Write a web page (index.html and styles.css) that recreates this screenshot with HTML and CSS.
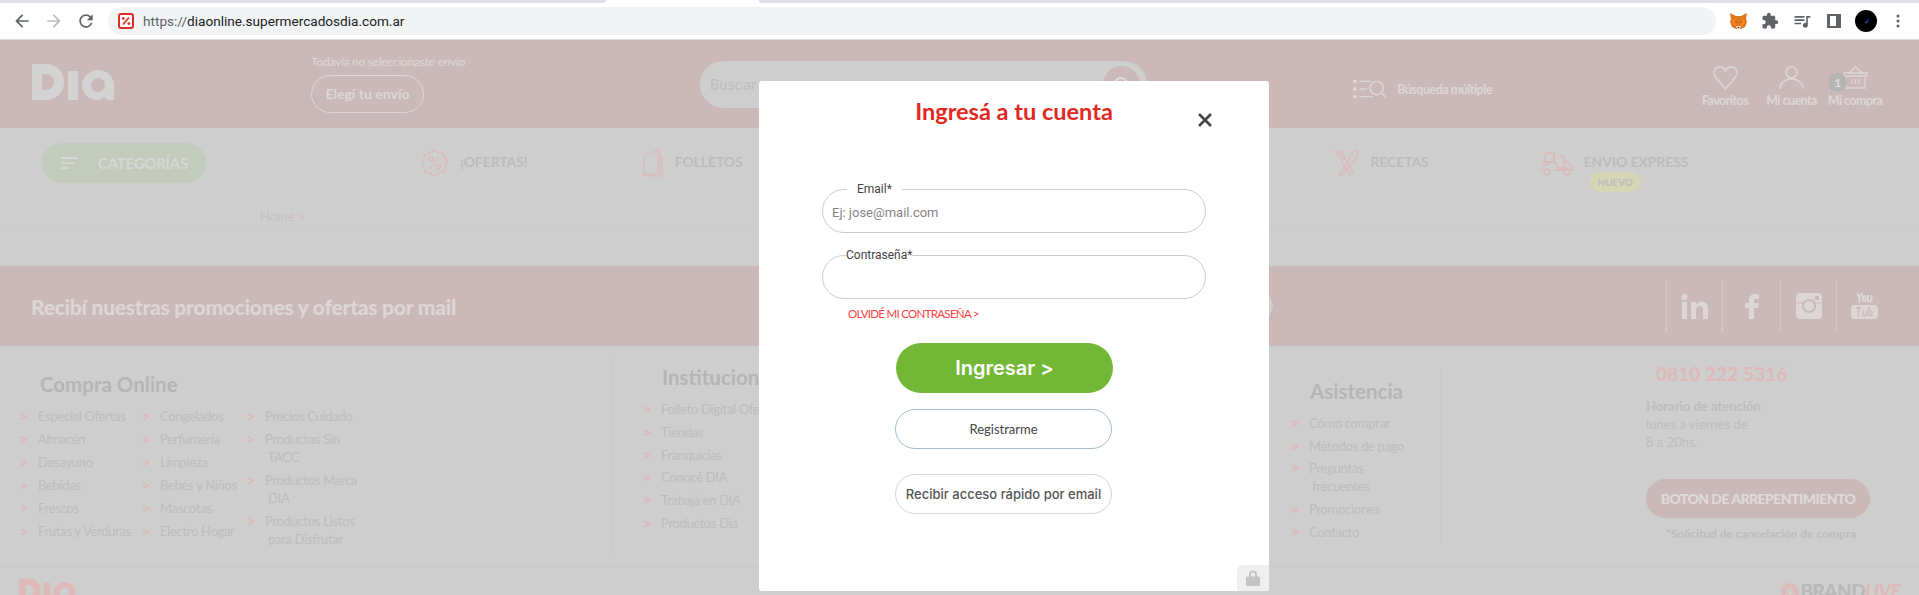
FILE: index.html
```html
<!DOCTYPE html>
<html lang="es">
<head>
<meta charset="utf-8">
<title>Dia Online</title>
<link rel="stylesheet" href="styles.css">
</head>
<body>

<svg class="defs" width="0" height="0">
  <symbol id="dia-logo" viewBox="0 0 83 36">
    <path fill-rule="evenodd" d="M0 0h13c12 0 19 8 19 18s-7 18-19 18H0zM10 10v16h3c5 0 9-3 9-8s-4-8-9-8z"/>
    <rect x="36" y="7" width="10" height="29"/>
    <path fill-rule="evenodd" d="M66 6c9 0 16 7 16 15v15h-6l-4-3c-2 1-4 3-7 3-8 0-15-7-15-15S58 6 66 6zM66 14a7 7 0 100 14 7 7 0 000-14z"/>
  </symbol>
</svg>

<div class="tabstrip">
  <div class="tab-off tab-left"></div>
  <div class="tab-on"></div>
  <div class="tab-off tab-right"></div>
</div>
<div class="toolbar">
  <svg class="nav-btn" viewBox="0 0 24 24"><path d="M20 11H7.830l5.590-5.590L12 4l-8 8 8 8 1.410-1.410L7.830 13H20v-2z"/></svg>
  <svg class="nav-btn off" viewBox="0 0 24 24"><path d="M12 4l-1.410 1.410L16.170 11H4v2h12.170l-5.580 5.590L12 20l8-8z"/></svg>
  <svg class="nav-btn" viewBox="0 0 24 24"><path d="M17.650 6.350A7.958 7.958 0 0012 4c-4.420 0-7.990 3.580-7.990 8s3.570 8 7.990 8c3.730 0 6.840-2.550 7.730-6h-2.080A5.990 5.990 0 0112 18c-3.310 0-6-2.690-6-6s2.690-6 6-6c1.660 0 3.140.69 4.220 1.780L13 11h7V4l-2.350 2.350z"/></svg>
  <div class="urlbar">
    <svg class="favicon" viewBox="0 0 16 16">
      <rect x="1" y="1" width="14" height="14" rx="2" fill="#fff" stroke="#e02b2b" stroke-width="2"/>
      <path d="M11 4.500L5 11.500" stroke="#e02b2b" stroke-width="1.800"/>
      <circle cx="5.200" cy="5.400" r="1.400" fill="#e02b2b"/>
      <circle cx="10.800" cy="10.600" r="1.400" fill="#e02b2b"/>
    </svg>
    <span class="url"><span class="url-dim">https://</span>diaonline.supermercadosdia.com.ar</span>
  </div>
  <div class="ext-icons">
    <div class="ext">
      <svg width="17" height="16" viewBox="0 0 17 16">
        <path fill="#e2761b" d="M0 0l6 3h5l6-3-1 6 1 3-2 5-4 2H6l-4-2-2-5 1-3z"/>
        <path fill="#f6851b" d="M2 7l3-1 2 4-1 3-3-1zM15 7l-3-1-2 4 1 3 3-1z"/>
        <path fill="#763d16" d="M5 8l2 1-1 1zM12 8l-2 1 1 1z"/>
        <path fill="#e4e0dc" d="M6 13h5l-1 3H7z"/>
        <path fill="#222" d="M7.500 14h2l-1 1.500z"/>
      </svg>
    </div>
    <div class="ext">
      <svg class="ext-gray" width="18" height="18" viewBox="0 0 24 24"><path d="M20.500 11H19V7c0-1.100-.9-2-2-2h-4V3.500C13 2.120 11.880 1 10.500 1S8 2.120 8 3.500V5H4c-1.100 0-1.990.9-1.990 2v3.800H3.500c1.490 0 2.700 1.210 2.700 2.700s-1.210 2.700-2.700 2.700H2V20c0 1.100.9 2 2 2h3.800v-1.500c0-1.490 1.210-2.700 2.700-2.700 1.490 0 2.700 1.210 2.700 2.700V22H17c1.100 0 2-.9 2-2v-4h1.500c1.380 0 2.500-1.120 2.500-2.500S21.880 11 20.500 11z"/></svg>
    </div>
    <div class="ext">
      <svg class="ext-gray" width="20" height="20" viewBox="0 0 24 24"><path d="M15 6H3v2h12V6zm0 4H3v2h12v-2zM3 16h8v-2H3v2zM17 6v8.180c-.31-.11-.65-.18-1-.18-1.660 0-3 1.340-3 3s1.340 3 3 3 3-1.340 3-3V8h3V6h-5z"/></svg>
    </div>
    <div class="ext">
      <svg class="ext-gray" width="14" height="14" viewBox="0 0 14 14"><path fill-rule="evenodd" d="M0 0h14v14H0zM3 2v10h6V2z"/></svg>
    </div>
    <div class="ext">
      <svg width="22" height="22" viewBox="0 0 22 22">
        <circle cx="11" cy="11" r="11" fill="#000"/>
        <path d="M13 9.500c0 2-1.200 3.200-3 3.200" fill="none" stroke="#1d4fc4" stroke-width="1.200"/>
      </svg>
    </div>
    <div class="ext">
      <svg class="ext-gray" width="4" height="14" viewBox="0 0 4 14"><circle cx="2" cy="2" r="1.500"/><circle cx="2" cy="7" r="1.500"/><circle cx="2" cy="12" r="1.500"/></svg>
    </div>
  </div>
</div>

<div class="page">
  <header class="top">
    <svg class="logo"><use href="#dia-logo"/></svg>
    <div class="envio">
      <div class="envio-note">Todavía no seleccionaste envío</div>
      <div class="envio-btn">Elegí tu envío</div>
    </div>
    <div class="search">
      <span>Buscar</span>
      <div class="search-go">
        <svg width="20" height="20" viewBox="0 0 20 20" fill="none" stroke="#dcdcdc" stroke-width="2"><circle cx="9" cy="9" r="6"/><path d="M13.500 13.500L18 18"/></svg>
      </div>
    </div>
    <div class="multi">
      <svg width="35" height="20" viewBox="0 0 35 20" fill="none" stroke="#dcd6d6" stroke-width="1.500">
        <circle cx="2" cy="2" r="1.200" fill="#dcd6d6"/><circle cx="2" cy="10" r="1.200" fill="#dcd6d6"/><circle cx="2" cy="18" r="1.200" fill="#dcd6d6"/>
        <path d="M7 2h12M7 10h8M7 18h14"/>
        <circle cx="25" cy="9" r="7"/><path d="M30 14l5 5"/>
      </svg>
      <span>Búsqueda múltiple</span>
    </div>
    <div class="user-item fav">
      <svg width="25" height="24" viewBox="0 0 25 24" fill="none" stroke="#dcd6d6" stroke-width="1.300"><path d="M12.500 23L2.500 11C-1 6 2 1 7 1c2.500 0 4.500 1.500 5.500 4 1-2.500 3-4 5.500-4 5 0 8 5 4.500 10z"/></svg>
      <span>Favoritos</span>
    </div>
    <div class="user-item acct">
      <svg width="25" height="24" viewBox="0 0 25 24" fill="none" stroke="#dcd6d6" stroke-width="1.500"><circle cx="12.500" cy="6.500" r="5.500"/><path d="M1 23c0-6 5-10 11.500-10S24 17 24 23"/></svg>
      <span>Mi cuenta</span>
    </div>
    <div class="user-item cart">
      <svg width="25" height="24" viewBox="0 0 25 24" fill="none" stroke="#dcd6d6" stroke-width="1.300"><path d="M1 7h23v3H1zM3 10v12h19V10M6 7l6.500-6L19 7M9 13v5M12.500 13v5M16 13v5"/></svg>
      <span>Mi compra</span>
      <div class="badge">1</div>
    </div>
  </header>

  <nav class="menu">
    <div class="menu-row">
      <div class="cats">
        <svg width="17" height="12" viewBox="0 0 17 12" fill="#d6d6d6"><rect width="17" height="2"/><rect y="5" width="13" height="2"/><rect y="10" width="8" height="2"/></svg>
        <span>CATEGORÍAS</span>
      </div>
      <div class="menu-link ofertas">
        <svg width="27" height="28" viewBox="0 0 27 28" fill="none" stroke="#dcb8b8" stroke-width="1.200"><path d="M13.500 1l4 2.500 4.500.5 1.500 4.500L26 13l-1.500 4.500L24 22l-4.500 1.500L13.500 27l-5-3L4 23l-1-5L1 14l2-4.500L4 5l4.500-1z"/><circle cx="10" cy="10" r="2.200"/><circle cx="17" cy="18" r="2.200"/><path d="M18 8L9 20"/></svg>
        <span>¡OFERTAS!</span>
      </div>
      <div class="menu-link folletos">
        <svg width="20" height="28" viewBox="0 0 20 28" fill="none" stroke="#dcb8b8" stroke-width="1"><path d="M1 7l14-6v22L1 27zM15 5h2v21H5M17 7h2v20H7"/></svg>
        <span>FOLLETOS</span>
      </div>
      <div class="menu-link recetas">
        <svg width="25" height="28" viewBox="0 0 25 28" fill="none" stroke="#dcb8b8" stroke-width="1.200"><path d="M1 1l15 25 3-2L7 1M4 1l6 10M23 2c-4-1-8 4-8 9l-10 15 3 1 10-14c4 0 7-7 5-11z"/></svg>
        <span>RECETAS</span>
      </div>
      <div class="menu-link express">
        <svg width="34" height="24" viewBox="0 0 34 24" fill="none" stroke="#dcb8b8" stroke-width="1.300"><rect x="5" y="1" width="9" height="9" rx="1"/><path d="M3 10h12l3 6h7l-2-12h-3M1 19c0-4 3-7 8-7M24 9c4 1 8 4 8 9H14"/><circle cx="7" cy="20" r="3"/><circle cx="27" cy="20" r="3"/></svg>
        <div class="express-text">
          <span>ENVIO EXPRESS</span>
          <div class="nuevo">NUEVO</div>
        </div>
      </div>
    </div>
    <div class="crumb">Home <em>&gt;</em></div>
  </nav>

  <section class="band">
    <div class="band-title">Recibí nuestras promociones y ofertas por mail</div>
    <div class="band-input"></div>
    <div class="social">
      <div class="social-cell">
        <svg width="27" height="25" viewBox="0 0 27 25" fill="#dcd6d6"><circle cx="3.500" cy="3" r="3"/><rect x="1" y="8" width="5" height="17"/><path d="M10 8h5v2.500C16 9 18 7.600 20.500 7.600 25 7.600 27 10.500 27 15v10h-5v-9c0-2.500-1-4-3-4s-4 1.500-4 4v9h-5z"/></svg>
      </div>
      <div class="social-cell">
        <svg width="14" height="25" viewBox="0 0 14 25" fill="#dcd6d6"><path d="M4 25V14H0V9h4V6c0-4 2.500-6 6-6h4v5h-3c-1.500 0-2 .7-2 2v2h5l-.7 5H9v11z"/></svg>
      </div>
      <div class="social-cell">
        <svg width="26" height="26" viewBox="0 0 26 26"><rect width="26" height="26" rx="4" fill="#dcd6d6"/><circle cx="13" cy="13" r="6" fill="none" stroke="#cbb9b9" stroke-width="2"/><rect x="19" y="3" width="4" height="4" fill="#cbb9b9"/><path d="M0 10h7M19 10h7" stroke="#cbb9b9"/></svg>
      </div>
      <div class="social-cell">
        <svg width="27" height="26" viewBox="0 0 27 26"><path fill="#dcd6d6" d="M4 12h19a4 4 0 014 4v6a4 4 0 01-4 4H4a4 4 0 01-4-4v-6a4 4 0 014-4z"/><path fill="none" stroke="#dcd6d6" stroke-width="2" d="M6 0l2.500 5V10M11 0L8.500 5M12 3.500v4c0 1 2.500 1 2.500 0v-4c0-1-2.500-1-2.500 0zM17 2v6c0 1 1.500 1 3 0M20.500 2v7"/><path fill="none" stroke="#cbb9b9" stroke-width="1.300" d="M5 15h5M7.500 15v9M12 17v5c0 1 2 1 3 0M15.500 17v6M18 14v9M18 18c2-1 3 0 3 1v2c0 2-2 2-3 1"/></svg>
      </div>
    </div>
  </section>

  <footer class="links">
    <div class="col col-shop">
      <h3>Compra Online</h3>
      <div class="shop-lists">
        <ul class="fl fl-a">
          <li><i>&gt;</i><span>Especial Ofertas</span></li>
          <li><i>&gt;</i><span>Almacén</span></li>
          <li><i>&gt;</i><span>Desayuno</span></li>
          <li><i>&gt;</i><span>Bebidas</span></li>
          <li><i>&gt;</i><span>Frescos</span></li>
          <li><i>&gt;</i><span>Frutas y Verduras</span></li>
        </ul>
        <ul class="fl fl-b">
          <li><i>&gt;</i><span>Congelados</span></li>
          <li><i>&gt;</i><span>Perfumería</span></li>
          <li><i>&gt;</i><span>Limpieza</span></li>
          <li><i>&gt;</i><span>Bebés y Niños</span></li>
          <li><i>&gt;</i><span>Mascotas</span></li>
          <li><i>&gt;</i><span>Electro Hogar</span></li>
        </ul>
        <ul class="fl fl-c">
          <li><i>&gt;</i><span>Precios Cuidado</span></li>
          <li><i>&gt;</i><span>Productos Sin<br>&nbsp;TACC</span></li>
          <li><i>&gt;</i><span>Productos Marca<br>&nbsp;DIA</span></li>
          <li><i>&gt;</i><span>Productos Listos<br>&nbsp;para Disfrutar</span></li>
        </ul>
      </div>
    </div>
    <div class="col col-inst">
      <h3>Institucional</h3>
      <ul class="fl">
        <li><i>&gt;</i><span>Folleto Digital Ofertas</span></li>
        <li><i>&gt;</i><span>Tiendas</span></li>
        <li class="tight"><i>&gt;</i><span>Franquicias</span></li>
        <li><i>&gt;</i><span>Conocé DIA</span></li>
        <li><i>&gt;</i><span>Trabajá en DIA</span></li>
        <li><i>&gt;</i><span>Productos Dia</span></li>
      </ul>
    </div>
    <div class="col col-help">
      <h3>Asistencia</h3>
      <ul class="fl">
        <li><i>&gt;</i><span>Cómo comprar</span></li>
        <li class="tight"><i>&gt;</i><span>Métodos de pago</span></li>
        <li><i>&gt;</i><span>Preguntas<br>&nbsp;frecuentes</span></li>
        <li><i>&gt;</i><span>Promociones</span></li>
        <li><i>&gt;</i><span>Contacto</span></li>
      </ul>
    </div>
    <div class="col col-contact">
      <div class="phone">0810 222 5316</div>
      <div class="hours"><b>Horario de atención</b><br>lunes a viernes de<br>8 a 20hs.</div>
      <div class="regret">BOTON DE ARREPENTIMIENTO</div>
      <div class="regret-note">*Solicitud de cancelación de compra</div>
    </div>
  </footer>

  <div class="bottom">
    <svg class="logo-small"><use href="#dia-logo"/></svg>
    <div class="brand">
      <svg width="18" height="18" viewBox="0 0 18 18"><circle cx="9" cy="9" r="9" fill="#deb9b9"/><path d="M9 4v10M4.500 6.500l9 5M13.500 6.500l-9 5" stroke="#cecece" stroke-width="1.500"/></svg>
      <span>BRAND<em>LIVE</em></span>
    </div>
  </div>
</div>

<div class="modal">
  <h2 class="modal-title">Ingresá a tu cuenta</h2>
  <svg class="modal-close" width="14" height="14" viewBox="0 0 14 14"><path d="M1 1l12 12M13 1L1 13" stroke="#444" stroke-width="2.600"/></svg>
  <fieldset class="field field-email">
    <legend>Email*</legend>
    <input type="text" placeholder="Ej: jose@mail.com">
  </fieldset>
  <fieldset class="field field-pass">
    <legend>Contraseña*</legend>
    <input type="password">
  </fieldset>
  <a class="forgot">OLVIDÉ MI CONTRASEÑA &gt;</a>
  <div class="btn-login">Ingresar &gt;</div>
  <div class="btn-line btn-register">Registrarme</div>
  <div class="btn-line btn-quick">Recibir acceso rápido por email</div>
  <div class="lock">
    <svg width="14" height="16" viewBox="0 0 14 16" fill="#c4c4c4"><path d="M3 7V4.500a4 4 0 018 0V7h-2V4.500a2 2 0 00-4 0V7z"/><rect y="6.500" width="14" height="9.500" rx="1.500"/></svg>
  </div>
</div>

</body>
</html>
```

FILE: styles.css
```css
html, body {
    margin: 0;
    height: 595px;
    overflow: hidden;
}
body {
    position: relative;
    background: #cecece;
    font-family: Lato, "Open Sans", sans-serif;
}
.defs {
    position: absolute;
}
ul {
    list-style: none;
    margin: 0;
    padding: 0;
}

/* browser bar */
.tabstrip {
    display: flex;
    height: 3px;
    background: #fff;
}
.tab-off {
    background: #dee1e6;
}
.tab-left {
    width: 606px;
    border-bottom-right-radius: 3px;
}
.tab-on {
    width: 153px;
}
.tab-right {
    flex: 1;
    border-bottom-left-radius: 3px;
}
.toolbar {
    display: flex;
    align-items: center;
    gap: 12px;
    height: 36px;
    padding-left: 12px;
    background: #fff;
    border-bottom: 1px solid #dadce0;
    box-sizing: content-box;
}
.nav-btn {
    width: 20px;
    height: 20px;
    fill: #5f6368;
}
.nav-btn.off {
    fill: #babcbe;
}
.urlbar {
    display: flex;
    align-items: center;
    width: 1598px;
    height: 28px;
    padding-left: 10px;
    background: #f1f3f4;
    border-radius: 14px;
    margin-bottom: 1px;
}
.favicon {
    width: 16px;
    height: 16px;
}
.url {
    margin-left: 9px;
    font: 13.6px Roboto, sans-serif;
    color: #202124;
}
.url-dim {
    color: #5f6368;
}
.ext-icons {
    display: flex;
    margin-left: -6px;
}
.ext {
    display: flex;
    align-items: center;
    justify-content: center;
    width: 32px;
    height: 24px;
}
.ext-gray {
    fill: #5f6368;
}

/* header */
.top {
    display: flex;
    align-items: flex-start;
    height: 88px;
    background: #cbb9b9;
    color: #dcd6d6;
}
.logo {
    width: 83px;
    height: 36px;
    margin: 24px 0 0 32px;
    fill: #d3d3d3;
}
.envio {
    width: 154px;
    margin: 16px 0 0 196px;
}
.envio-note {
    font-size: 12px;
    line-height: 12px;
    letter-spacing: -.25px;
    white-space: nowrap;
}
.envio-btn {
    width: 113px;
    height: 38px;
    margin-top: 7px;
    border: 1px solid #dcd6d6;
    border-radius: 19px;
    box-sizing: border-box;
    font-size: 14px;
    font-weight: 700;
    line-height: 36px;
    text-align: center;
}
.search {
    display: flex;
    align-items: center;
    justify-content: space-between;
    width: 447px;
    height: 47px;
    margin: 21px 0 0 235px;
    padding: 0 7px 0 10px;
    box-sizing: border-box;
    background: #cecece;
    border-radius: 24px;
    font: 14px Inter, sans-serif;
    color: #bdbdbd;
}
.search-go {
    display: flex;
    align-items: center;
    justify-content: center;
    width: 37px;
    height: 37px;
    background: #cbb9b9;
    border-radius: 50%;
}
.multi {
    display: flex;
    align-items: center;
    gap: 11px;
    width: 139px;
    margin: 39px 0 0 206px;
    font-size: 12.5px;
    font-weight: 700;
    letter-spacing: -.5px;
}
.multi span {
    white-space: nowrap;
}
.user-item {
    position: relative;
    display: flex;
    flex-direction: column;
    align-items: center;
    margin-top: 26px;
    font-size: 12.5px;
    font-weight: 700;
    line-height: 14px;
    letter-spacing: -.55px;
    white-space: nowrap;
}
.user-item span {
    margin-top: 4px;
}
.fav {
    width: 44px;
    margin-left: 211px;
}
.acct {
    width: 49px;
    margin-left: 20px;
}
.cart {
    width: 54px;
    margin-left: 12px;
}
.badge {
    position: absolute;
    top: 7px;
    left: 0;
    width: 19px;
    height: 19px;
    background: #b5b5b5;
    border-radius: 50%;
    color: #dcdcdc;
    font-size: 12px;
    font-weight: 700;
    line-height: 19px;
    text-align: center;
}

/* menu */
.menu {
    height: 138px;
    color: #bcbcbc;
}
.menu-row {
    display: flex;
    align-items: flex-start;
    height: 66px;
    padding-top: 15px;
    box-sizing: border-box;
}
.cats {
    display: flex;
    align-items: center;
    gap: 20px;
    width: 164px;
    height: 40px;
    margin-left: 42px;
    padding-left: 19px;
    box-sizing: border-box;
    background: #c3cbbd;
    border-radius: 20px;
    color: #d6d6d6;
    font-size: 15px;
    font-weight: 700;
    letter-spacing: -.25px;
}
.menu-link {
    display: flex;
    align-items: flex-start;
    gap: 12px;
    margin-top: 6px;
    font-size: 14px;
    font-weight: 700;
    line-height: 26px;
    letter-spacing: -.1px;
    white-space: nowrap;
}
.ofertas {
    margin-left: 215px;
}
.folletos {
    margin-left: 115px;
}
.recetas {
    width: 95px;
    margin-left: 591px;
}
.express {
    gap: 10px;
    margin-left: 111px;
}
.express svg {
    margin-top: 3px;
}
.nuevo {
    width: 51px;
    height: 20px;
    margin: -3px 0 0 6px;
    background: #d6d6b4;
    border-radius: 10px;
    color: #bdbdbd;
    font-size: 10px;
    line-height: 20px;
    text-align: center;
}
.crumb {
    height: 35px;
    padding: 14px 0 0 260px;
    box-sizing: border-box;
    border-bottom: 1px dotted #c8c8c8;
    font-size: 13px;
    line-height: 16px;
    color: #c2c2c2;
}
.crumb em {
    font-style: normal;
    color: #d8bcbc;
}

/* mail band */
.band {
    display: flex;
    align-items: center;
    height: 80px;
    background: #cbb9b9;
    color: #dcd6d6;
}
.band-title {
    width: 426px;
    margin-left: 31px;
    font-size: 21px;
    font-weight: 900;
    letter-spacing: -.25px;
    white-space: nowrap;
}
.band-input {
    width: 273px;
    height: 26px;
    margin-left: 543px;
    background: #cecece;
    border-radius: 13px;
}
.social {
    display: flex;
    margin-left: auto;
    padding-right: 27px;
}
.social-cell {
    display: flex;
    align-items: center;
    justify-content: center;
    width: 55px;
    height: 50px;
    border-left: 1px dotted #dcd6d6;
}
.social-cell:nth-child(2) {
    width: 57px;
}

/* footer columns */
.links {
    display: flex;
    align-items: flex-start;
    height: 221px;
    box-sizing: border-box;
    border-bottom: 1px dotted #c4c4c4;
    color: #bdbdbd;
}
.col h3 {
    margin: 0;
    font-size: 20.5px;
    font-weight: 700;
    line-height: 24px;
    color: #b5b5b5;
    white-space: nowrap;
}
.fl {
    font-size: 13px;
    line-height: 18px;
    letter-spacing: -.3px;
}
.fl li {
    display: flex;
    gap: 10px;
    margin-bottom: 5px;
    white-space: nowrap;
}
.fl li.tight {
    margin-bottom: 4px;
}
.fl i {
    width: 8px;
    font: 700 12px/18px Inter, sans-serif;
    color: #deb9b9;
}
.col-shop {
    width: 613px;
    height: 198px;
    margin-top: 11px;
    padding: 15px 0 0 20px;
    box-sizing: border-box;
    border-right: 1px dotted #c4c4c4;
}
.col-shop h3 {
    margin-left: 20px;
}
.shop-lists {
    display: flex;
    margin-top: 11px;
}
.fl-a {
    width: 122px;
}
.fl-b {
    width: 105px;
}
.col-inst {
    width: 678px;
    padding: 19px 0 0 30px;
    box-sizing: border-box;
}
.col-inst h3 {
    margin-left: 19px;
}
.col-inst .fl {
    margin-top: 11px;
}
.col-help {
    width: 150px;
    height: 172px;
    margin-top: 24px;
    padding-top: 9px;
    box-sizing: border-box;
    border-right: 1px dotted #c4c4c4;
}
.col-help h3 {
    margin-left: 19px;
}
.col-help .fl {
    margin-top: 11px;
}
.col-contact {
    margin-left: 205px;
    padding-top: 16px;
}
.phone {
    margin-left: 10px;
    font-size: 19px;
    font-weight: 900;
    line-height: 24px;
    letter-spacing: .1px;
    color: #deb9b9;
}
.hours {
    margin-top: 11px;
    font-size: 13px;
    line-height: 18px;
}
.regret {
    width: 224px;
    height: 39px;
    margin-top: 28px;
    background: #cbb9b9;
    border-radius: 20px;
    color: #dedada;
    font-size: 14px;
    font-weight: 900;
    line-height: 39px;
    letter-spacing: -.55px;
    text-align: center;
    white-space: nowrap;
}
.regret-note {
    margin: 9px 0 0 20px;
    font-size: 12px;
    font-weight: 700;
    line-height: 14px;
    letter-spacing: -.05px;
    white-space: nowrap;
}

/* bottom strip, cut by the window */
.bottom {
    display: flex;
    justify-content: space-between;
    padding: 11px 19px 0 19px;
}
.logo-small {
    width: 57px;
    height: 25px;
    fill: #deb9b9;
}
.brand {
    display: flex;
    align-items: flex-start;
    gap: 2px;
    margin-top: 5px;
    font-size: 19px;
    font-weight: 900;
    line-height: 16px;
    letter-spacing: -.6px;
    color: #b9b9b9;
}
.brand em {
    font-style: italic;
    font-weight: 900;
    color: #deb9b9;
}

/* login modal */
.modal {
    position: absolute;
    left: 759px;
    top: 81px;
    width: 510px;
    height: 510px;
    background: #fff;
    border-radius: 3px;
    overflow: hidden;
}
.modal-title {
    margin: 19px 0 0;
    font-size: 23.5px;
    font-weight: 700;
    line-height: 22px;
    text-align: center;
    color: #e0281f;
}
.modal-close {
    position: absolute;
    top: 32px;
    left: 439px;
}
.field {
    width: 384px;
    height: 50px;
    margin: 0 0 0 63px;
    padding: 0;
    box-sizing: border-box;
    border: 1px solid #ccc;
    border-radius: 22px;
    font-family: Roboto, sans-serif;
}
.field legend {
    padding: 0;
    font-size: 12px;
    line-height: 12px;
    color: #444;
}
.field input {
    display: block;
    width: 100%;
    height: 34px;
    padding: 0 0 0 9px;
    box-sizing: border-box;
    border: 0;
    outline: 0;
    background: transparent;
    font: 13px Roboto, sans-serif;
}
.field input::placeholder {
    color: #858585;
}
.field-email {
    margin-top: 61px;
}
.field-email legend {
    margin-left: 24px;
    padding: 0 10px;
}
.field-pass {
    margin-top: 16px;
}
.field-pass legend {
    margin-left: 23px;
}
.forgot {
    display: block;
    margin: 8px 0 0 89px;
    font-size: 11.5px;
    line-height: 14px;
    letter-spacing: -.7px;
    color: #ff4040;
}
.btn-login {
    width: 217px;
    height: 50px;
    margin: 22px 0 0 137px;
    background: #72b735;
    border-radius: 25px;
    color: #fff;
    font: 600 20px/50px Inter, sans-serif;
    text-align: center;
}
.btn-line {
    width: 217px;
    height: 40px;
    margin-left: 136px;
    box-sizing: border-box;
    border: 1px solid #d6d6d6;
    border-radius: 20px;
    font-size: 13px;
    line-height: 38px;
    text-align: center;
    color: #444;
}
.btn-register {
    margin-top: 16px;
    border-color: #a6bbc8;
}
.btn-quick {
    margin-top: 25px;
    font-family: Inter, sans-serif;
    font-weight: 500;
    color: #555;
}
.lock {
    position: absolute;
    right: 0;
    bottom: 0;
    display: flex;
    align-items: center;
    justify-content: center;
    width: 32px;
    height: 26px;
    background: #efefef;
    border-top-left-radius: 6px;
}
```
